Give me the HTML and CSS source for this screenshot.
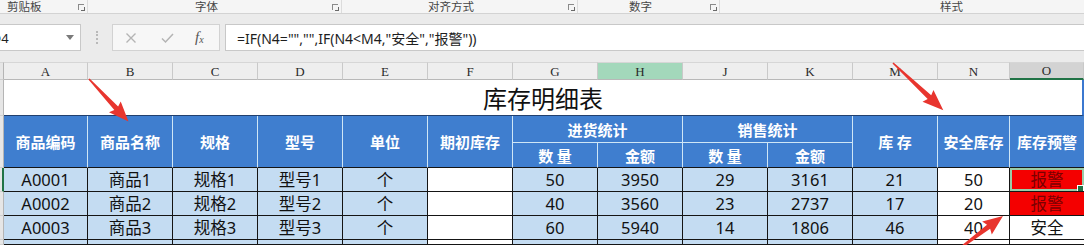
FILE: index.html
```html
<!DOCTYPE html>
<html lang="zh-CN">
  <head>
    <meta charset="UTF-8" />
    <title>库存明细表</title>
    <link rel="stylesheet" href="styles.css">
  </head>
  <body>
    <div class="app">
      <div class="ribbon">
        <div class="ribbon__grp ribbon__grp--clip"><span>剪贴板</span><i class="launcher"></i></div>
        <div class="ribbon__grp ribbon__grp--font"><span>字体</span><i class="launcher"></i></div>
        <div class="ribbon__grp ribbon__grp--align"><span>对齐方式</span><i class="launcher"></i></div>
        <div class="ribbon__grp ribbon__grp--num"><span>数字</span><i class="launcher"></i></div>
        <div class="ribbon__grp ribbon__grp--style"><span>样式</span></div>
      </div>

      <div class="fbar">
        <div class="fbar__name">
          <span>O4</span>
          <svg class="fbar__drop" width="8" height="5" viewBox="0 0 8 5"><path d="M0 0h8L4 5z" fill="#7a7a7a"/></svg>
        </div>
        <div class="fbar__dots"></div>
        <div class="fbar__btns">
          <svg class="fbar__icon" width="12" height="12" viewBox="0 0 12 12"><path d="M1.5 1.5l9 9M10.5 1.5l-9 9" stroke="#b4b4b4" stroke-width="1.4"/></svg>
          <svg class="fbar__icon fbar__icon--ok" width="13" height="12" viewBox="0 0 13 12"><path d="M1 6.5l3.5 3.5L12 2" stroke="#b4b4b4" stroke-width="1.5" fill="none"/></svg>
          <span class="fbar__fx">f<sub>x</sub></span>
        </div>
        <div class="fbar__input">=IF(N4="","",IF(N4&lt;M4,"安全","报警"))</div>
      </div>

      <table class="sheet">
        <colgroup>
          <col style="width:4px"><col style="width:84px">
          <col style="width:85px"><col style="width:85px"><col style="width:85px">
          <col style="width:85px"><col style="width:85px"><col style="width:85px">
          <col style="width:85px"><col style="width:85px"><col style="width:85px">
          <col style="width:85px"><col style="width:72px"><col style="width:74px">
        </colgroup>
        <tr class="sheet__cols">
          <th class="rh"></th>
          <th>A</th><th>B</th><th>C</th><th>D</th><th>E</th><th>F</th><th>G</th>
          <th class="is-hover">H</th><th>J</th><th>K</th><th>M</th><th>N</th>
          <th class="is-active">O</th>
        </tr>
        <tr class="sheet__title">
          <td class="rh"></td>
          <td colspan="13">库存明细表</td>
        </tr>
        <tr class="sheet__hd1">
          <td class="rh" rowspan="2"></td>
          <th rowspan="2">商品编码</th>
          <th rowspan="2">商品名称</th>
          <th rowspan="2">规格</th>
          <th rowspan="2">型号</th>
          <th rowspan="2">单位</th>
          <th rowspan="2">期初库存</th>
          <th colspan="2" class="grp">进货统计</th>
          <th colspan="2" class="grp">销售统计</th>
          <th rowspan="2">库 存</th>
          <th rowspan="2">安全库存</th>
          <th rowspan="2">库存预警</th>
        </tr>
        <tr class="sheet__hd2">
          <th>数 量</th><th>金额</th><th>数 量</th><th>金额</th>
        </tr>
        <tr class="sheet__row">
          <td class="rh rh--sel"></td>
          <td>A0001</td><td>商品1</td><td>规格1</td><td>型号1</td><td>个</td>
          <td class="white"></td><td>50</td><td>3950</td><td>29</td><td>3161</td><td>21</td>
          <td class="white">50</td><td class="alarm is-sel">报警</td>
        </tr>
        <tr class="sheet__row">
          <td class="rh"></td>
          <td>A0002</td><td>商品2</td><td>规格2</td><td>型号2</td><td>个</td>
          <td class="white"></td><td>40</td><td>3560</td><td>23</td><td>2737</td><td>17</td>
          <td class="white">20</td><td class="alarm">报警</td>
        </tr>
        <tr class="sheet__row">
          <td class="rh"></td>
          <td>A0003</td><td>商品3</td><td>规格3</td><td>型号3</td><td>个</td>
          <td class="white"></td><td>60</td><td>5940</td><td>14</td><td>1806</td><td>46</td>
          <td class="white">40</td><td class="white">安全</td>
        </tr>
        <tr class="sheet__row sheet__row--cut">
          <td class="rh"></td>
          <td></td><td></td><td></td><td></td><td></td>
          <td class="white"></td><td></td><td></td><td></td><td></td><td></td>
          <td class="white"></td><td class="white"></td>
        </tr>
      </table>

      <!-- red annotation arrows drawn over the sheet -->
      <svg class="arrows" width="1084" height="245" viewBox="0 0 1084 245">
        <g fill="#e8352e">
          <polygon transform="translate(89 79) rotate(47.1)" points="0,-0.8 40,-2.6 38,-8 58,0 38,8 40,2.6 0,0.8"/>
          <polygon transform="translate(893 63) rotate(43.2)" points="0,-0.8 50,-2.6 48,-8 69,0 48,8 50,2.6 0,0.8"/>
          <polygon transform="translate(955 252) rotate(-36.9)" points="0,-0.8 42,-2.6 40,-8 60,0 40,8 42,2.6 0,0.8"/>
        </g>
      </svg>
    </div>
  </body>
</html>
```

FILE: styles.css
```css
* {
  box-sizing: border-box;
  margin: 0;
  padding: 0;
}

:root {
  --head-blue: #3f7ecf;
  --cell-blue: #c4dcf2;
  --line-light: #cfe6f6;
  --grid-dark: #151515;
  --xl-green: #217346;
}

body {
  font-family: "Noto Sans", "Noto Sans CJK SC", sans-serif;
  background: #fff;
  width: 1084px;
  height: 245px;
  overflow: hidden;
}
.app {
  position: relative;
  width: 1084px;
  height: 245px;
  overflow: hidden;
}

/* ribbon group captions */
.ribbon {
  display: flex;
  height: 14px;
  background: #f5f5f5;
  border-bottom: 1px solid #d3d3d3;
  font-family: "Noto Sans CJK SC", sans-serif;
  font-size: 11.5px;
  line-height: 13px;
  color: #454545;
}
.ribbon__grp {
  display: flex;
  align-items: flex-start;
  border-right: 1px solid #dcdcdc;
}
.ribbon__grp--clip { width: 88px; padding-left: 7px; }
.ribbon__grp--font { width: 254px; padding-left: 107px; }
.ribbon__grp--align { width: 236px; padding-left: 86px; }
.ribbon__grp--num { width: 142px; padding-left: 51px; }
.ribbon__grp--style { width: 364px; padding-left: 220px; border-right: none; }
.launcher {
  margin-left: auto;
  margin-right: 3px;
  margin-top: 4px;
  width: 6px;
  height: 6px;
  border-left: 1px solid #8a8a8a;
  border-top: 1px solid #8a8a8a;
  position: relative;
}
.launcher::after {
  content: "";
  position: absolute;
  right: -1px;
  bottom: -1px;
  width: 3px;
  height: 3px;
  border-right: 1px solid #6a6a6a;
  border-bottom: 1px solid #6a6a6a;
}

/* formula bar */
.fbar {
  display: flex;
  align-items: center;
  height: 48px;
  padding: 10px 0 11px;
  background: #ebebeb;
}
.fbar > * {
  height: 27px;
}
.fbar__name {
  display: flex;
  align-items: center;
  width: 95px;
  margin-left: -14px;
  padding: 0 6px 0 4px;
  background: #fff;
  border: 1px solid #c8c8c8;
  font-size: 13px;
  color: #222;
}
.fbar__drop {
  margin-left: auto;
}
.fbar__dots {
  width: 2px;
  height: 13px;
  margin-left: 15px;
  border-left: 2px dotted #b9b9b9;
}
.fbar__btns {
  display: flex;
  align-items: center;
  width: 108px;
  margin-left: 14px;
  padding-left: 12px;
  background: #f7f7f7;
  border: 1px solid #d2d2d2;
}
.fbar__icon--ok {
  margin-left: 24px;
}
.fbar__fx {
  margin-left: 21px;
  font-family: "Liberation Serif", serif;
  font-style: italic;
  font-size: 15px;
  color: #555;
  line-height: 1;
}
.fbar__fx sub {
  font-size: 10px;
  vertical-align: -1px;
}
.fbar__input {
  flex: 1;
  margin-left: 5px;
  padding-left: 11px;
  display: flex;
  align-items: center;
  background: #fff;
  border: 1px solid #c8c8c8;
  border-right: none;
  font-size: 14px;
  color: #1e1e1e;
}

/* sheet */
.sheet {
  border-collapse: separate;
  border-spacing: 0;
  table-layout: fixed;
  width: 1084px;
}
.sheet th,
.sheet td {
  padding: 0;
  text-align: center;
  white-space: nowrap;
  overflow: hidden;
}
.sheet .rh {
  background: #e6e6e6;
  border-right: 1px solid #b5b5b5;
  border-bottom: 1px solid #cfcfcf;
}
.sheet .rh--sel {
  border-right: 2px solid var(--xl-green);
}

.sheet__cols {
  height: 18px;
}
.sheet__cols th {
  background: #eeeeee;
  border-top: 1px solid #d6d6d6;
  border-right: 1px solid #c9c9c9;
  border-bottom: 1px solid #b8b8b8;
  font-family: "Liberation Serif", serif;
  font-weight: normal;
  font-size: 13px;
  line-height: 15px;
  color: #2a2a2a;
}
.sheet__cols th.is-hover {
  background: #a3d8bb;
}
.sheet__cols th.is-active {
  background: #d3d3d3;
  border-bottom: 2px solid var(--xl-green);
}

.sheet__title {
  height: 36px;
}
.sheet__title td:last-child {
  font-family: "Noto Sans CJK SC", sans-serif;
  font-size: 24px;
  color: #111;
  border-bottom: 1px solid #22406e;
  border-right: 2px solid #3b78d0;
}

.sheet__hd1 { height: 27px; }
.sheet__hd2 { height: 25px; }
.sheet__hd1 th,
.sheet__hd2 th {
  background: var(--head-blue);
  color: #fff;
  font-family: "Noto Sans CJK SC", sans-serif;
  font-weight: bold;
  font-size: 15px;
  border-right: 1px solid var(--line-light);
  border-bottom: 1px solid var(--grid-dark);
}
.sheet__hd1 th.grp {
  border-bottom: 1px solid var(--line-light);
}
.sheet__hd1 th:last-child {
  border-right: none;
}

.sheet__row {
  height: 24px;
}
.sheet__row td {
  background: var(--cell-blue);
  border-right: 1px solid var(--grid-dark);
  border-bottom: 1px solid var(--grid-dark);
  font-size: 16.5px;
  line-height: 20px;
  color: #111;
}
.sheet__row td:last-child {
  border-right: none;
}
.sheet__row td.white {
  background: #fff;
}
.sheet__row td.alarm {
  background: #f40000;
  color: #7a0000;
}
.sheet__row td.is-sel {
  position: relative;
  box-shadow: inset 0 0 0 2px #9acba8;
}
.sheet__row td.is-sel::after {
  content: "";
  position: absolute;
  right: 0;
  bottom: -1px;
  width: 5px;
  height: 5px;
  background: var(--xl-green);
  border: 1px solid #fff;
}
.sheet__row--cut {
  height: 5px;
}

.arrows {
  position: absolute;
  top: 0;
  left: 0;
  pointer-events: none;
}
```
